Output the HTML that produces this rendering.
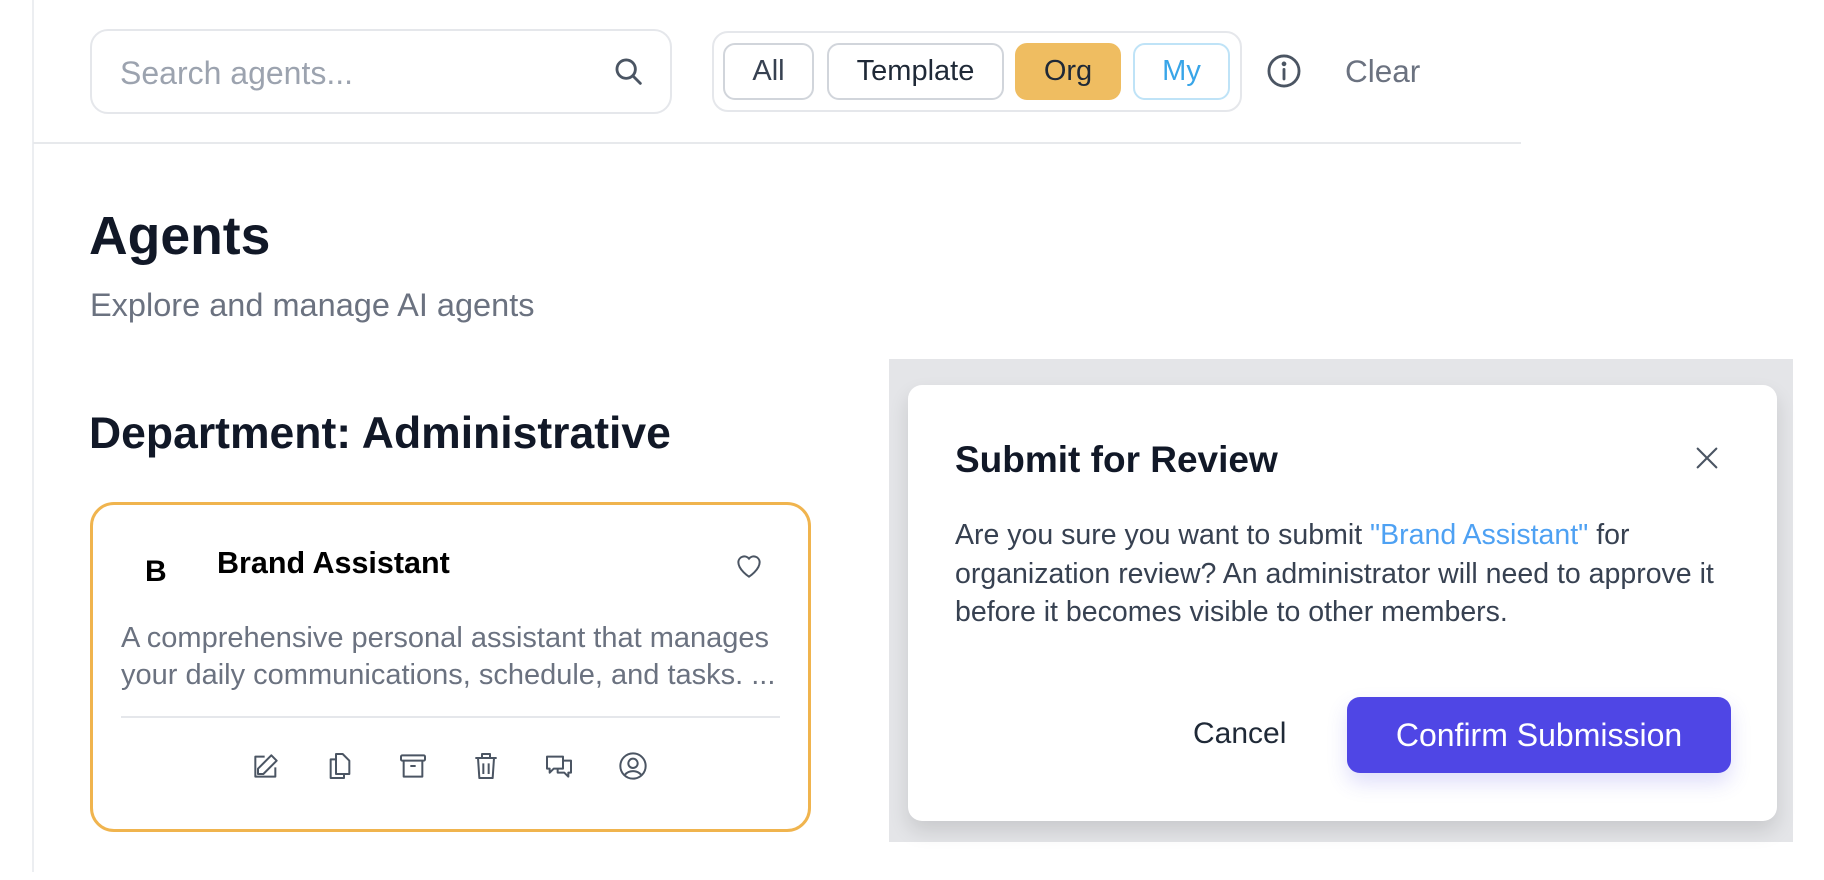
<!DOCTYPE html>
<html><head><meta charset="utf-8"><style>
*{box-sizing:border-box;margin:0;padding:0}
body{width:1824px;height:880px;background:#fff;font-family:"Liberation Sans",sans-serif;position:relative;overflow:hidden;color:#111827}
.abs{position:absolute}
.vline{left:32px;top:0;width:2px;height:872px;background:#eceef1}
.hline{left:33px;top:142px;width:1488px;height:2px;background:#e7e9ec}
.search{left:90px;top:29px;width:582px;height:85px;border:2px solid #e5e7eb;border-radius:18px}
.search span{position:absolute;left:28px;top:24px;font-size:32px;color:#9ca3af}
.filt{left:712px;top:31px;width:530px;height:81px;border:2px solid #e5e7eb;border-radius:16px}
.btn{position:absolute;top:43px;height:57px;border:2px solid #d1d5db;border-radius:12px;font-size:29px;display:flex;align-items:center;justify-content:center;color:#374151}
.card{left:90px;top:502px;width:721px;height:330px;border:3px solid #f0b44e;border-radius:24px}
.icons svg{position:absolute;top:750px}
.overlay{left:889px;top:359px;width:904px;height:483px;background:#e4e5e8}
.modal{left:908px;top:385px;width:869px;height:436px;background:#fff;border-radius:14px;box-shadow:0 10px 20px rgba(0,0,0,.12)}
</style></head><body>
<div class="abs vline"></div>
<div class="abs hline"></div>
<div class="abs search"><span>Search agents...</span>
<svg class="abs" style="left:520px;top:24px" width="34" height="34" viewBox="0 0 24 24" fill="none" stroke="#4b5563" stroke-width="2" stroke-linecap="round"><circle cx="10" cy="10" r="6.5"/><path d="M15 15l5 5"/></svg></div>
<div class="abs filt"></div>
<div class="btn" style="left:723px;width:91px">All</div>
<div class="btn" style="left:827px;width:177px;color:#1f2937">Template</div>
<div class="btn" style="left:1015px;width:106px;background:#efbd61;border-color:#efbd61;color:#1f2937">Org</div>
<div class="btn" style="left:1133px;width:97px;border-color:#bfe3f7;color:#38a5e8">My</div>
<svg class="abs" style="left:1265px;top:52px" width="38" height="38" viewBox="0 0 24 24" fill="none" stroke="#4b5563" stroke-width="1.8"><circle cx="12" cy="12" r="9.5"/><path d="M12 11v6" stroke-linecap="round"/><circle cx="12" cy="7.5" r=".6" fill="#4b5563"/></svg>
<div class="abs" style="left:1345px;top:53px;font-size:31.5px;color:#6b7280">Clear</div>
<div class="abs" style="left:89px;top:206px;font-size:53.5px;font-weight:bold;color:#111827">Agents</div>
<div class="abs" style="left:90px;top:287px;font-size:32.5px;color:#6b7280">Explore and manage AI agents</div>
<div class="abs" style="left:89px;top:409px;font-size:44.5px;font-weight:bold;color:#111827">Department: Administrative</div>
<div class="abs card"></div>
<div class="abs" style="left:145px;top:555px;font-size:30px;font-weight:bold;color:#000">B</div>
<div class="abs" style="left:217px;top:546px;font-size:30.5px;font-weight:bold;color:#000">Brand Assistant</div>
<svg class="abs" style="left:733px;top:550px" width="32" height="32" viewBox="0 0 24 24" fill="none" stroke="#4b5563" stroke-width="1.5"><path d="M12 20s-8-5-8-11a4.5 4.5 0 0 1 8-2.5A4.5 4.5 0 0 1 20 9c0 6-8 11-8 11z"/></svg>
<div class="abs" style="left:121px;top:620px;font-size:29px;line-height:37px;color:#6b7280;width:700px;white-space:nowrap">A comprehensive personal assistant that manages<br>your daily communications, schedule, and tasks. ...</div>
<div class="abs" style="left:121px;top:716px;width:659px;height:2px;background:#e5e7eb"></div>
<div class="icons">
<svg style="left:250px" width="32" height="32" viewBox="0 0 24 24" fill="none" stroke="#4b5563" stroke-width="1.5" stroke-linejoin="round"><path d="M16 4l4 4-10 10H6v-4z"/><path d="M11 5H4v15h15v-7"/></svg>
<svg style="left:324px" width="32" height="32" viewBox="0 0 24 24" fill="none" stroke="#4b5563" stroke-width="1.5" stroke-linejoin="round"><path d="M9 3h5l5 5v10H9z"/><path d="M9 7H5v14h10v-3"/></svg>
<svg style="left:397px" width="32" height="32" viewBox="0 0 24 24" fill="none" stroke="#4b5563" stroke-width="1.5" stroke-linejoin="round"><rect x="3" y="4" width="18" height="4" rx="1"/><path d="M5 8v12h14V8M10 12h4"/></svg>
<svg style="left:470px" width="32" height="32" viewBox="0 0 24 24" fill="none" stroke="#4b5563" stroke-width="1.5" stroke-linejoin="round"><path d="M4 6h16M9 6V3h6v3M6 6l1 15h10l1-15M10 10v8M14 10v8"/></svg>
<svg style="left:543px" width="32" height="32" viewBox="0 0 24 24" fill="none" stroke="#4b5563" stroke-width="1.5" stroke-linejoin="round"><path d="M3 5h12v9H8l-3 3v-3H3z"/><path d="M15 8h6v9h-2v3l-3-3h-5v-3"/></svg>
<svg style="left:617px" width="32" height="32" viewBox="0 0 24 24" fill="none" stroke="#4b5563" stroke-width="1.5"><circle cx="12" cy="12" r="9.5"/><circle cx="12" cy="10" r="3.5"/><path d="M6 18.5c3-3.5 9-3.5 12 0"/></svg>
</div>
<div class="abs overlay"></div>
<div class="abs modal"></div>
<div class="abs" style="left:955px;top:439px;font-size:37px;font-weight:bold;color:#111827">Submit for Review</div>
<svg class="abs" style="left:1691px;top:442px" width="32" height="32" viewBox="0 0 24 24" fill="none" stroke="#4b5563" stroke-width="1.6" stroke-linecap="round"><path d="M5 5l14 14M19 5L5 19"/></svg>
<div class="abs" style="left:955px;top:516px;font-size:28.5px;line-height:38.5px;color:#374151;width:820px;white-space:nowrap">Are you sure you want to submit <span style="color:#4ea1f3">"Brand Assistant"</span> for<br>organization review? An administrator will need to approve it<br>before it becomes visible to other members.</div>
<div class="abs" style="left:1193px;top:717px;font-size:30px;color:#1f2937">Cancel</div>
<div class="abs" style="left:1347px;top:697px;width:384px;height:76px;background:#4f46e5;border-radius:13px;color:#fff;font-size:32px;display:flex;align-items:center;justify-content:center;box-shadow:0 10px 20px rgba(79,70,229,.18)">Confirm Submission</div>
</body></html>
